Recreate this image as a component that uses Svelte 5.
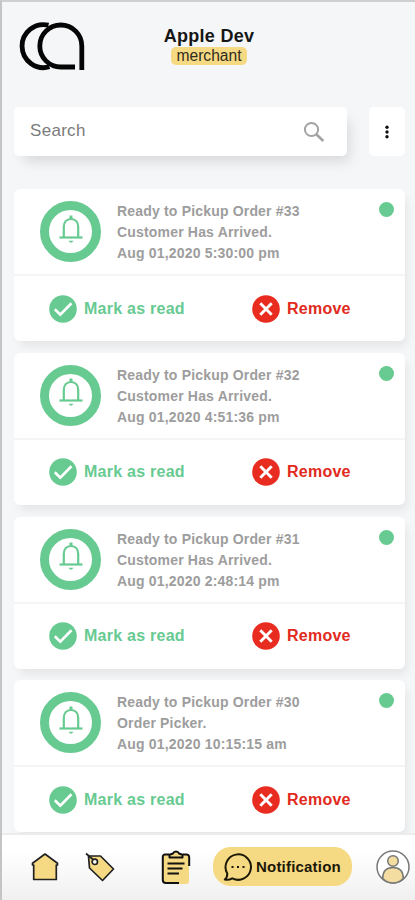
<script lang="ts">
  type Notice = { id: number; message: string; date: string };

  let notices = $state<Notice[]>([
    { id: 33, message: 'Customer Has Arrived.', date: 'Aug 01,2020 5:30:00 pm' },
    { id: 32, message: 'Customer Has Arrived.', date: 'Aug 01,2020 4:51:36 pm' },
    { id: 31, message: 'Customer Has Arrived.', date: 'Aug 01,2020 2:48:14 pm' },
    { id: 30, message: 'Order Picker.', date: 'Aug 01,2020 10:15:15 am' }
  ]);
  let read = $state<number[]>([]);
  let search = $state('');

  const shown = $derived(
    notices.filter((n) =>
      `Ready to Pickup Order #${n.id} ${n.message}`.toLowerCase().includes(search.toLowerCase())
    )
  );

  const markRead = (id: number) => {
    read = [...read, id];
  };

  const remove = (id: number) => {
    notices = notices.filter((n) => n.id !== id);
  };
</script>

<div class="app">
  <header>
    <svg class="logo" width="68" height="52" viewBox="0 0 68 52" fill="none" stroke="#050505" stroke-width="4.8">
      <path d="M29.500 5.200A21.500 21.500 0 1 0 30.500 46.800" />
      <path d="M62.800 50V26A21 21 0 1 0 41.800 47H56" />
    </svg>
    <div class="account">
      <h1>Apple Dev</h1>
      <span class="role">merchant</span>
    </div>
  </header>

  <div class="toolbar">
    <label class="search">
      <input type="text" placeholder="Search" bind:value={search} />
      <svg width="22" height="22" viewBox="0 0 22 22" fill="none" stroke="#a3a3a3">
        <circle cx="8.5" cy="8.5" r="6.6" stroke-width="2" />
        <path d="M13.3 13.3L20.3 20" stroke-width="2.6" />
      </svg>
    </label>
    <button type="button" class="more" aria-label="More">
      <svg width="6" height="14" viewBox="0 0 6 14" fill="#111">
        <circle cx="3" cy="2.3" r="1.7" />
        <circle cx="3" cy="7" r="1.7" />
        <circle cx="3" cy="11.7" r="1.7" />
      </svg>
    </button>
  </div>

  <main>
    {#each shown as notice (notice.id)}
      <article class="card">
        <div class="details">
          <div class="bell">
            <svg width="26" height="30" viewBox="0 0 26 30" fill="none" stroke="#67ca91" stroke-width="2.2">
              <path d="M5.800 23V13C5.800 8.500 8.500 5 13 5S20.200 8.500 20.200 13V23" />
              <path d="M1.500 23.500H24.500" />
              <path d="M13 1.500V5" stroke-width="3" />
              <path d="M10.500 26.800H15.500L14 28.500H12Z" fill="#67ca91" stroke="none" />
            </svg>
          </div>
          <div class="text">
            <p>Ready to Pickup Order #{notice.id}</p>
            <p>{notice.message}</p>
            <p>{notice.date}</p>
          </div>
          {#if !read.includes(notice.id)}
            <span class="dot"></span>
          {/if}
        </div>
        <div class="actions">
          <button type="button" class="read" onclick={() => markRead(notice.id)}>
            <svg width="28" height="28" viewBox="0 0 28 28">
              <circle cx="14" cy="14" r="13.800" fill="#67ca91" />
              <path d="M5.800 14.300L11.300 19.700L22.500 8.300" fill="none" stroke="#fff" stroke-width="2.700" />
            </svg>
            <span>Mark as read</span>
          </button>
          <button type="button" class="remove" onclick={() => remove(notice.id)}>
            <svg width="28" height="28" viewBox="0 0 28 28">
              <circle cx="14" cy="14" r="13.800" fill="#e92c20" />
              <path d="M8.300 8.300L19.700 19.700M19.700 8.300L8.300 19.700" stroke="#fff" stroke-width="2.900" />
            </svg>
            <span>Remove</span>
          </button>
        </div>
      </article>
    {/each}
  </main>

  <nav>
    <a class="home" href="#home" aria-label="Home">
      <svg width="28" height="30" viewBox="0 0 28 30" fill="#f6da83" stroke="#222" stroke-width="1.700" stroke-linejoin="round">
        <path d="M1.500 11.200L14 2L26.500 11.200V13H25.300V27.500H2.700V13H1.500Z" />
      </svg>
    </a>
    <a class="tags" href="#tags" aria-label="Tags">
      <svg width="30" height="30" viewBox="0 0 30 30" stroke="#222" stroke-width="1.700" stroke-linejoin="round">
        <path d="M3.500 4H15.500L28.500 17L17.500 28.500L4.500 16Z" fill="#f6da83" />
        <path d="M1 1.500L8 7.500" />
        <circle cx="9.800" cy="9.800" r="2.700" fill="#fff" />
      </svg>
    </a>
    <a class="orders" href="#orders" aria-label="Orders">
      <svg width="30" height="37" viewBox="0 0 30 37" fill="none" stroke="#111" stroke-width="2">
        <rect x="2" y="6" width="26" height="30" rx="3" fill="#f6da83" stroke="none" />
        <path d="M8 6.500H4A2.200 2.200 0 0 0 1.800 8.700V32A3 3 0 0 0 4.800 35H18M22 6.500H25.500A2.700 2.700 0 0 1 28.200 9.200V18" />
        <path d="M8.500 9.500V6.800L12 5.500A3.300 3.300 0 0 1 18 5.500L21.500 6.800V9.500Z" fill="#f6da83" stroke-linejoin="round" />
        <path d="M6.500 15.500H23.500M6.500 20.500H21.500M6.500 25.500H18" />
      </svg>
    </a>
    <a class="current" href="#notification">
      <svg width="30" height="30" viewBox="0 0 30 30" fill="none" stroke="#1c1808" stroke-width="2">
        <path d="M4.300 21.500A12.700 12.700 0 1 1 9.300 26.300Q5.500 28.500 1.800 27.500Q4.300 25.500 4.300 21.500Z" stroke-linejoin="round" />
        <path d="M8.500 15H10.500M14 15H16M19.500 15H21.500" />
      </svg>
      <span>Notification</span>
    </a>
    <a class="profile" href="#profile" aria-label="Profile">
      <svg width="34" height="34" viewBox="0 0 34 34" fill="#f3dda0" stroke="#777" stroke-width="1.500">
        <circle cx="17" cy="17" r="16" fill="#fff" />
        <path d="M6.700 28.500C6.700 21 11 17.500 17 17.500S27.300 21 27.300 28.500Q23 33 17 33T6.700 28.500Z" />
        <circle cx="17" cy="11" r="5.300" />
      </svg>
    </a>
  </nav>
</div>

<style>
  :global(body) {
    background: #f5f6f8;
  }

  .app {
    display: flex;
    flex-direction: column;
    height: 900px;
    box-sizing: border-box;
    border-top: 2px solid #cfcfd0;
    border-left: 2px solid #c4c4c5;
    overflow: hidden;
    background: #f5f6f8;
    font-family: 'Liberation Sans', Arial, sans-serif;
  }

  header {
    display: flex;
    flex: 0 0 105px;
  }

  .logo {
    margin: 18px 0 0 17px;
  }

  .account {
    display: flex;
    flex-direction: column;
    align-items: center;
    margin: 23px 0 0 75px;
    width: 94px;
  }

  h1 {
    margin: 0;
    font-size: 18px;
    line-height: 22px;
    font-weight: 700;
    letter-spacing: 0.3px;
    white-space: nowrap;
    color: #161616;
  }

  .role {
    width: 76px;
    border-radius: 5px;
    background: #f6da83;
    text-align: center;
    font-size: 15.6px;
    line-height: 18px;
    color: #302b20;
  }

  .toolbar {
    display: flex;
    flex: 0 0 49px;
    margin: 0 10px 33px 12px;
    justify-content: space-between;
  }

  .search {
    display: flex;
    align-items: center;
    box-sizing: border-box;
    width: 333px;
    padding: 0 22px 0 16px;
    border-radius: 5px;
    background: #fff;
    box-shadow: 6px 9px 14px -4px rgba(0, 0, 0, 0.13);
  }

  input {
    flex: 1;
    min-width: 0;
    padding: 0 0 2px;
    border: 0;
    outline: 0;
    font: 17px 'Liberation Sans', Arial, sans-serif;
    letter-spacing: 0.3px;
    background: transparent;
  }

  input::placeholder {
    color: #7b7b7b;
    opacity: 1;
  }

  .more {
    display: flex;
    align-items: center;
    justify-content: center;
    width: 36px;
    padding: 0;
    border: 0;
    border-radius: 5px;
    background: #fff;
  }

  main {
    display: flex;
    flex: 1;
    flex-direction: column;
    gap: 11.8px;
    min-height: 0;
    overflow: hidden;
    padding: 0 10px 0 12px;
  }

  .card {
    flex: 0 0 152px;
    border-radius: 6px;
    background: #fff;
    box-shadow: 4px 7px 10px -2px rgba(0, 0, 0, 0.07);
  }

  .details {
    display: flex;
    box-sizing: border-box;
    height: 87px;
    padding: 12px 11px 0 26px;
    border-bottom: 2px solid #f5f5f6;
  }

  .bell {
    display: flex;
    align-items: center;
    justify-content: center;
    box-sizing: border-box;
    width: 61px;
    height: 61px;
    padding-bottom: 6px;
    border: 9px solid #67ca91;
    border-radius: 50%;
  }

  .text {
    flex: 1;
    margin: 0 0 0 16px;
    font-size: 14px;
    font-weight: 700;
    line-height: 21px;
    letter-spacing: 0.18px;
    color: #9d9d9d;
  }

  p {
    margin: 0;
  }

  .dot {
    width: 15px;
    height: 15px;
    margin-top: 1px;
    border-radius: 50%;
    background: #67ca91;
  }

  .actions {
    display: flex;
    align-items: center;
    height: 65px;
    padding-left: 35px;
  }

  .actions button {
    display: flex;
    align-items: center;
    gap: 7px;
    padding: 0;
    border: 0;
    background: none;
    font: 700 16px 'Liberation Sans', Arial, sans-serif;
    letter-spacing: 0.25px;
    cursor: pointer;
  }

  .actions .read {
    width: 203px;
    color: #67ca91;
  }

  .actions .remove {
    color: #e12a20;
  }

  nav {
    display: flex;
    flex: 0 0 67px;
    align-items: center;
    box-sizing: border-box;
    padding-bottom: 2px;
    border-top: 2px solid #ececed;
    background: linear-gradient(#fff 25%, #f0f0f0);
  }

  nav a {
    display: flex;
    flex: none;
    align-items: center;
    color: #1c1808;
    text-decoration: none;
  }

  .home {
    margin-left: 29px;
  }

  .tags {
    margin-left: 26px;
  }

  .orders {
    margin-left: 46px;
  }

  .current {
    box-sizing: border-box;
    width: 139px;
    height: 39px;
    margin-left: 22px;
    padding-left: 10px;
    gap: 3px;
    border-radius: 18px;
    background: #f6da83;
    font-size: 15px;
    font-weight: 700;
    letter-spacing: 0.2px;
  }

  .profile {
    margin-left: 24px;
  }
</style>
